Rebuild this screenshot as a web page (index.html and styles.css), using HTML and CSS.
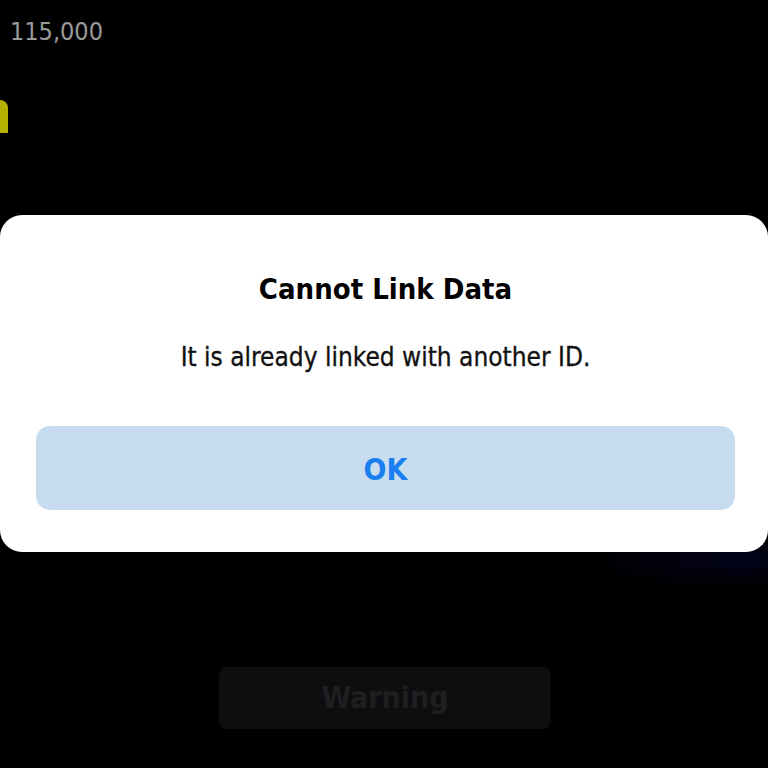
FILE: index.html
```html
<!DOCTYPE html>
<html>
<head>
<meta charset="utf-8">
<link rel="stylesheet" href="styles.css">
</head>
<body>
<div class="screen">
  <div class="balance">115,000</div>
  <div class="tab"></div>
  <div class="dialog">
    <div class="title">Cannot Link Data</div>
    <div class="message">It is already linked with another ID.</div>
    <div class="ok">OK</div>
  </div>
  <div class="warning">Warning</div>
</div>
</body>
</html>
```
FILE: styles.css
```css
html, body {
  margin: 0;
  padding: 0;
  background: #000;
}
.screen {
  width: 768px;
  height: 768px;
  overflow: hidden;
  display: flex;
  flex-direction: column;
  font-family: "DejaVu Sans Condensed", "DejaVu Sans", sans-serif;
  background: radial-gradient(ellipse 160px 30px at 740px 560px, #03031a 0%, #000 100%);
}
.balance {
  margin: 16px 0 0 10px;
  height: 32px;
  line-height: 32px;
  font-size: 25px;
  color: #9a9a9a;
}
.tab {
  margin-top: 52px;
  width: 8px;
  height: 33px;
  background: #b3b300;
  border-top-right-radius: 8px;
}
.dialog {
  margin-top: 82px;
  height: 337px;
  background: #fff;
  border-radius: 22px;
  box-sizing: border-box;
  padding: 56px 33px 0 36px;
  display: flex;
  flex-direction: column;
  align-items: stretch;
}
.title {
  text-align: center;
  font-weight: bold;
  font-size: 29px;
  line-height: 36px;
  color: #000;
}
.message {
  margin-top: 34px;
  text-align: center;
  font-size: 26px;
  line-height: 32px;
  color: #111;
  -webkit-text-stroke: 0.3px #111;
}
.ok {
  margin-top: 53px;
  height: 84px;
  line-height: 88px;
  text-align: center;
  background: #c8dcf0;
  border-radius: 14px;
  color: #1a7ff0;
  font-size: 30px;
  font-weight: bold;
}
.warning {
  margin: 115px 0 0 219px;
  width: 332px;
  height: 62px;
  line-height: 62px;
  text-align: center;
  background: #0e0e10;
  border-radius: 8px;
  color: #1f1f21;
  font-size: 30px;
  font-weight: bold;
}
```
